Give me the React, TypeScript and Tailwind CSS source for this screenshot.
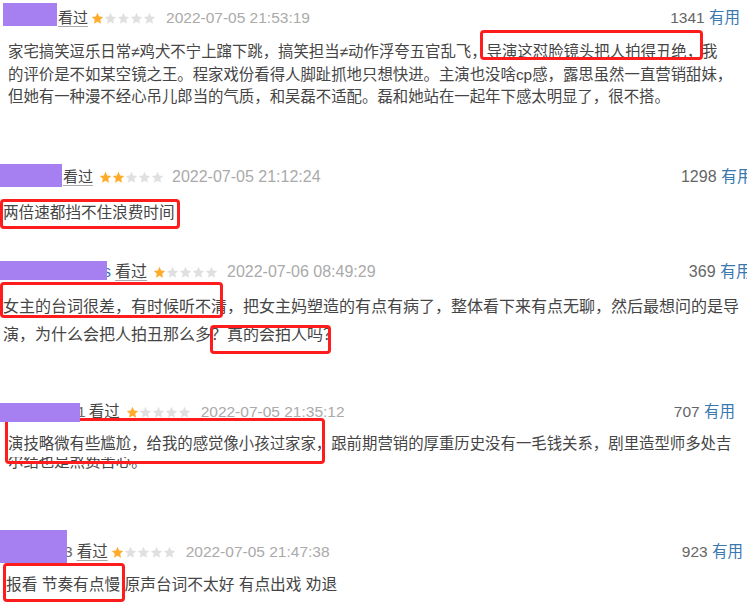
import React from "react";

const FONT = '"Liberation Sans","Noto Sans CJK SC",sans-serif';

function Star({ on }: { on: boolean }) {
  return (
    <svg width="13" height="13" viewBox="0 0 24 24" className="shrink-0">
      <polygon
        points="12,1.5 15.1,8.3 22.5,9.1 17,14.1 18.5,21.5 12,17.8 5.5,21.5 7,14.1 1.5,9.1 8.9,8.3"
        fill={on ? "#ffac2d" : "#e0e0e0"}
      />
    </svg>
  );
}

function Stars({ n }: { n: number }) {
  return (
    <span className="flex items-center">
      {[0, 1, 2, 3, 4].map((i) => (
        <Star key={i} on={i < n} />
      ))}
    </span>
  );
}

function RedBox({ cls }: { cls: string }) {
  return <div className={"absolute border-[3px] border-[#ff1c1c] rounded-[4px] pointer-events-none " + cls} />;
}

export default function App() {
  return (
    <div className="relative w-[747px] h-[614px] bg-white overflow-hidden text-[#454545]" style={{ fontFamily: FONT }}>
      {/* Block 1 */}
      <div className="h-[150px] flex flex-col">
        <div className="flex items-start">
          <div className="relative z-10 shrink-0 ml-[3px] mt-[3px] w-[54px] h-[23px] bg-[#a67ff0]" />
          <div className="flex items-center mt-[7px] h-[22px] flex-1 text-[15.5px]">
            <span className="ml-[1px] text-[15px] underline decoration-[#aaa] underline-offset-[3px]">看过</span>
            <span className="ml-[3px]"><Stars n={1} /></span>
            <span className="ml-[10px] text-[#aaa]">2022-07-05 21:53:19</span>
            <span className="ml-auto mr-[7px] text-[#666]">1341 <span className="text-[#3a78b0]">有用</span></span>
          </div>
        </div>
        <div className="mt-[12px] pl-[8px] text-[15.4px] leading-[22.5px] whitespace-nowrap">
          <div>家宅搞笑逗乐日常≠鸡犬不宁上蹿下跳，搞笑担当≠动作浮夸五官乱飞，导演这怼脸镜头把人拍得丑绝，我</div>
          <div>的评价是不如某空镜之王。程家戏份看得人脚趾抓地只想快进。主演也没啥cp感，露思虽然一直营销甜妹，</div>
          <div>但她有一种漫不经心吊儿郎当的气质，和吴磊不适配。磊和她站在一起年下感太明显了，很不搭。</div>
        </div>
      </div>

      {/* Block 2 */}
      <div className="h-[105px] flex flex-col">
        <div className="flex items-start">
          <div className="relative z-10 shrink-0 mt-[14px] w-[62px] h-[23px] bg-[#a67ff0]" />
          <div className="flex items-center mt-[16px] h-[22px] flex-1 text-[16px]">
            <span className="ml-[1px] text-[15px] underline decoration-[#aaa] underline-offset-[3px]">看过</span>
            <span className="ml-[6px]"><Stars n={2} /></span>
            <span className="ml-[8px] text-[#aaa]">2022-07-05 21:12:24</span>
            <span className="ml-auto mr-[-6px] text-[#666]">1298 <span className="text-[#3a78b0]">有用</span></span>
          </div>
        </div>
        <div className="mt-[13px] pl-[3px] text-[15.6px] leading-[24px] whitespace-nowrap">
          <div>两倍速都挡不住浪费时间</div>
        </div>
      </div>

      {/* Block 3 */}
      <div className="h-[135px] flex flex-col">
        <div className="flex items-start">
          <div className="relative z-10 shrink-0 mt-[6px] w-[107px] h-[19px] bg-[#a67ff0]" />
          <div className="flex items-center mt-[6px] h-[22px] flex-1 text-[16px]">
            <span className="-ml-[4px] text-[#3a78b0]">s</span>
            <span className="ml-[4px] underline decoration-[#aaa] underline-offset-[3px]">看过</span>
            <span className="ml-[6px]"><Stars n={1} /></span>
            <span className="ml-[9px] text-[#aaa]">2022-07-06 08:49:29</span>
            <span className="ml-auto mr-[-5px] text-[#666]">369 <span className="text-[#3a78b0]">有用</span></span>
          </div>
        </div>
        <div className="mt-[10px] pl-[3px] text-[16px] leading-[28px] whitespace-nowrap">
          <div>女主的台词很差，有时候听不清，把女主妈塑造的有点有病了，整体看下来有点无聊，然后最想问的是导</div>
          <div>演，为什么会把人拍丑那么多？真的会拍人吗？</div>
        </div>
      </div>

      {/* Block 4 */}
      <div className="h-[130px] flex flex-col">
        <div className="flex items-start">
          <div className="relative z-10 shrink-0 mt-[13px] w-[80px] h-[19px] bg-[#a67ff0]" />
          <div className="flex items-center mt-[11px] h-[22px] flex-1 text-[15.5px]">
            <span className="-ml-[3px] text-[#666]">1</span>
            <span className="ml-[3px] underline decoration-[#aaa] underline-offset-[3px]">看过</span>
            <span className="ml-[6px]"><Stars n={1} /></span>
            <span className="ml-[10px] text-[#aaa]">2022-07-05 21:35:12</span>
            <span className="ml-auto mr-[12px] text-[#666]">707 <span className="text-[#3a78b0]">有用</span></span>
          </div>
        </div>
        <div className="mt-[6.5px] pl-[8px] text-[15.4px] leading-[27px] whitespace-nowrap">
          <div>演技略微有些尴尬，给我的感觉像小孩过家家，跟前期营销的厚重历史没有一毛钱关系，剧里造型师多处吉</div>
          <div className="h-[18px] overflow-hidden flex items-end">
            <div className="shrink-0 leading-[27px]">尔结也是煞费苦心。</div>
          </div>
        </div>
      </div>

      {/* Block 5 */}
      <div className="h-[94px] flex flex-col">
        <div className="flex items-start">
          <div className="relative z-10 shrink-0 mt-[10px] w-[67px] h-[33px] bg-[#a67ff0]" />
          <div className="flex items-center mt-[21px] h-[22px] flex-1 text-[15.5px]">
            <span className="-ml-[3px] text-[#666]">3</span>
            <span className="ml-[4px] underline decoration-[#aaa] underline-offset-[3px]">看过</span>
            <span className="ml-[3px]"><Stars n={1} /></span>
            <span className="ml-[10px] text-[#aaa]">2022-07-05 21:47:38</span>
            <span className="ml-auto mr-[4px] text-[#666]">923 <span className="text-[#3a78b0]">有用</span></span>
          </div>
        </div>
        <div className="mt-[9px] pl-[6px] text-[15.7px] leading-[26px] whitespace-nowrap">
          <div>报看 节奏有点慢 原声台词不太好 有点出戏 劝退</div>
        </div>
      </div>

      {/* Red highlight boxes */}
      <RedBox cls="left-[480px] top-[30px] w-[223px] h-[30px]" />
      <RedBox cls="left-[0px] top-[199px] w-[180px] h-[30px]" />
      <RedBox cls="left-[0px] top-[282px] w-[223px] h-[36px]" />
      <RedBox cls="left-[210px] top-[325px] w-[121px] h-[29px]" />
      <RedBox cls="left-[5px] top-[418px] w-[320px] h-[46px]" />
      <RedBox cls="left-[3px] top-[563px] w-[122px] h-[39px]" />
    </div>
  );
}
